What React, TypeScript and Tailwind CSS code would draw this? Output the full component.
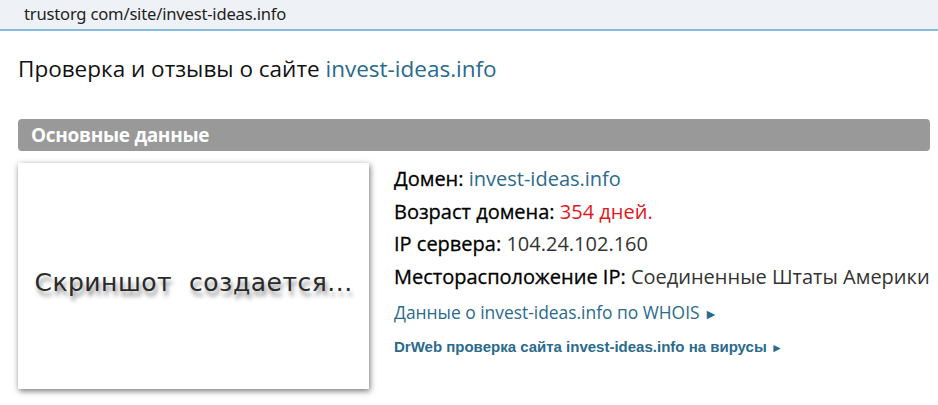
import React from 'react';

const App: React.FC = () => {
  const font = { fontFamily: '"Open Sans", "Noto Sans", Arial, sans-serif' };
  return (
    <div className="w-[938px] h-[405px] bg-white overflow-hidden" style={font}>
      {/* address bar */}
      <div className="h-[31px] bg-[#eef1f5] border-b-2 border-[#86bcd9] flex items-center pl-[24px]">
        <span className="text-[16.6px] text-[#1f1f1f] tracking-[-0.2px]" style={{ fontFamily: '"Noto Sans", "Open Sans", sans-serif' }}>
          trustorg com/site/invest-ideas.info
        </span>
      </div>

      <div className="px-[18px]">
        <h1 className="mt-[23px] text-[22.5px] leading-[30px] text-[#111]">
          Проверка и отзывы о сайте <span className="text-[#2a6a8c]">invest-ideas.info</span>
        </h1>

        <div className="mt-[35px] w-[912px] h-[32px] rounded-[4px] bg-[#999999] flex items-center pl-[13px]">
          <span className="text-[19px] font-bold text-white tracking-[-0.3px]">Основные данные</span>
        </div>

        <div className="flex mt-[12px]">
          <div className="shrink-0 w-[351px] h-[226px] bg-white shadow-[1px_2px_6px_rgba(0,0,0,0.55)] flex items-center justify-center">
            <span
              className="text-[25px] text-[#2a2a2a] tracking-[0.5px] pt-[14px] whitespace-nowrap"
              style={{ fontFamily: '"DejaVu Sans", sans-serif', textShadow: '2px 5px 4px rgba(0,0,0,0.45)' }}
            >
              Скриншот&nbsp; создается...
            </span>
          </div>

          <div className="ml-[25px] flex flex-col text-[20px] text-black whitespace-nowrap">
            <div className="h-[32.5px] leading-[32.5px]">
              <span className="[-webkit-text-stroke:0.3px_#000]">Домен:</span> <span className="text-[#2a6a8c]">invest-ideas.info</span>
            </div>
            <div className="h-[32.5px] leading-[32.5px]">
              <span className="[-webkit-text-stroke:0.3px_#000]">Возраст домена:</span> <span className="text-[#e0181c]">354 дней.</span>
            </div>
            <div className="h-[32.5px] leading-[32.5px]">
              <span className="[-webkit-text-stroke:0.3px_#000]">IP сервера:</span> <span className="text-[#333]">104.24.102.160</span>
            </div>
            <div className="h-[32.5px] leading-[32.5px]">
              <span className="[-webkit-text-stroke:0.3px_#000]">Месторасположение IP:</span> <span className="text-[#333]">Соединенные Штаты Америки</span>
            </div>
            <div className="h-[36px] leading-[38px] text-[17.4px] text-[#2a6a8c]">
              Данные о invest-ideas.info по WHOIS <span className="text-[14px]">►</span>
            </div>
            <div className="h-[35px] leading-[35px] text-[15px] font-bold text-[#2a6a8c]" style={{ fontFamily: '"Liberation Sans", Arial, sans-serif' }}>
              DrWeb проверка сайта invest-ideas.info на вирусы <span className="text-[12px]">►</span>
            </div>
          </div>
        </div>
      </div>
    </div>
  );
};

export default App;
